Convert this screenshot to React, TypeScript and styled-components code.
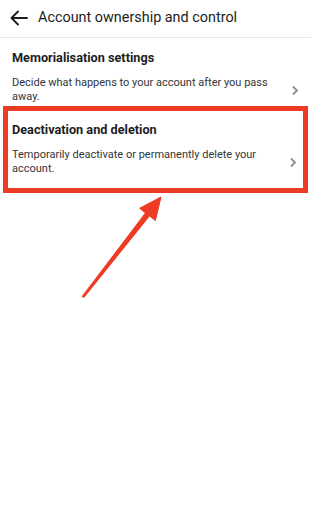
import styled, { createGlobalStyle } from 'styled-components';

const GlobalStyle = createGlobalStyle`
  html, body {
    margin: 0;
    padding: 0;
    background: #ffffff;
  }
  * {
    box-sizing: border-box;
  }
`;

const Screen = styled.div`
  position: relative;
  width: 311px;
  height: 512px;
  overflow: hidden;
  background: #ffffff;
  font-family: Roboto, "Liberation Sans", sans-serif;
  color: #1c1e21;
`;

const Header = styled.div`
  display: flex;
  align-items: center;
  gap: 10px;
  height: 38px;
  padding: 0 10px 2px;
  border-bottom: 1px solid #e4e6e9;
`;

const BackButton = styled.button`
  display: flex;
  align-items: center;
  padding: 0;
  border: none;
  background: none;
  color: #1c1e21;
`;

const Title = styled.h1`
  margin: 0;
  font-size: 14.4px;
  font-weight: 400;
  color: #1c1e21;
`;

const Row = styled.div<{ $highlighted?: boolean }>`
  display: flex;
  align-items: center;
  margin: 0 ${(p) => (p.$highlighted ? '3px' : '0')};
  padding: ${(p) => (p.$highlighted ? '11px 6px 13px 4px' : '12px 12px 3px 12px')};
  border: ${(p) => (p.$highlighted ? '5px solid #ee3b24' : 'none')};
`;

const RowText = styled.div`
  flex: 1;
  display: flex;
  flex-direction: column;
  gap: 10px;
`;

const RowTitle = styled.div`
  font-size: 12.7px;
  line-height: 16px;
  font-weight: 700;
  color: #1c1e21;
`;

const RowDesc = styled.div`
  max-width: 266px;
  font-size: 11px;
  line-height: 13.5px;
  color: #333538;
`;

const Chevron = styled.svg`
  flex: none;
  margin-top: 28px;
  margin-left: 6px;
`;

const Annotation = styled.svg`
  position: absolute;
  left: 0;
  top: 0;
  pointer-events: none;
`;

const ChevronIcon = () => (
  <Chevron width="8" height="11" viewBox="0 0 8 11">
    <path d="M2 1.5 L6 5.5 L2 9.5" fill="none" stroke="#8a8d91" strokeWidth="1.8" />
  </Chevron>
);

const items = [
  {
    title: 'Memorialisation settings',
    desc: 'Decide what happens to your account after you pass away.',
  },
  {
    title: 'Deactivation and deletion',
    desc: 'Temporarily deactivate or permanently delete your account.',
    highlighted: true,
  },
];

export default function App() {
  return (
    <Screen>
      <GlobalStyle />
      <Header>
        <BackButton aria-label="Back">
          <svg width="18" height="16" viewBox="0 0 18 16">
            <path
              d="M17 8 H2 M8 1.5 L1.5 8 L8 14.5"
              fill="none"
              stroke="#1c1e21"
              strokeWidth="1.9"
              strokeLinecap="round"
              strokeLinejoin="round"
            />
          </svg>
        </BackButton>
        <Title>Account ownership and control</Title>
      </Header>
      {items.map((item) => (
        <Row key={item.title} $highlighted={item.highlighted}>
          <RowText>
            <RowTitle>{item.title}</RowTitle>
            <RowDesc>{item.desc}</RowDesc>
          </RowText>
          <ChevronIcon />
        </Row>
      ))}
      <Annotation width="311" height="512" viewBox="0 0 311 512">
        <polygon
          points="82.2,296.4 145.5,212.9 139.6,208.3 161,197 155.4,220.5 149.5,215.9 83.8,297.6"
          fill="#ee3b24"
          stroke="#ee3b24"
          strokeWidth="1"
          strokeLinejoin="round"
        />
      </Annotation>
    </Screen>
  );
}
